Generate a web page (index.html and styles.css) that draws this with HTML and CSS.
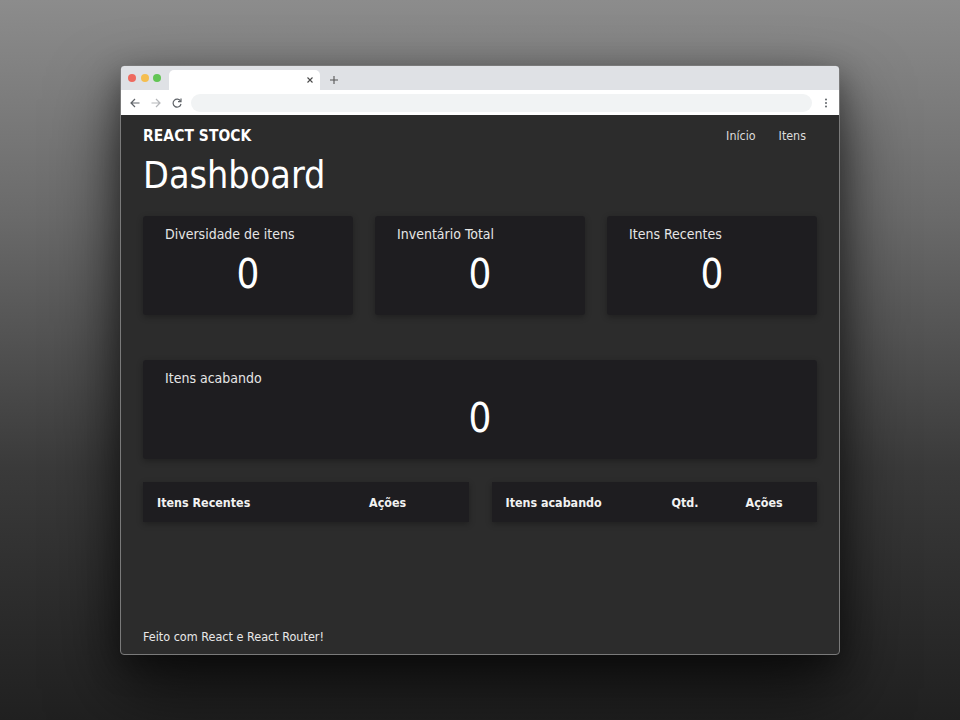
FILE: index.html
```html
<!DOCTYPE html>
<html lang="pt-BR">
<head>
<meta charset="utf-8">
<title>React Stock</title>
<link rel="stylesheet" href="styles.css">
</head>
<body>
<div class="window">
  <div class="titlebar">
    <div class="dots">
      <span class="dot red"></span>
      <span class="dot yellow"></span>
      <span class="dot green"></span>
    </div>
    <div class="tab">
      <svg class="tab-close" width="8" height="8" viewBox="0 0 8 8"><path d="M1.5 1.5L6.5 6.5M6.5 1.5L1.5 6.5" stroke="#4a4a4a" stroke-width="1.1" fill="none"/></svg>
    </div>
    <svg class="newtab" width="10" height="10" viewBox="0 0 10 10"><path d="M5 1V9M1 5H9" stroke="#555" stroke-width="1.1" fill="none"/></svg>
  </div>
  <div class="toolbar">
    <svg class="nav-icon" width="12" height="12" viewBox="0 0 12 12"><path d="M10.5 6H2M6 2L2 6L6 10" stroke="#5f6368" stroke-width="1.2" fill="none"/></svg>
    <svg class="nav-icon" width="12" height="12" viewBox="0 0 12 12"><path d="M1.5 6H10M6 2L10 6L6 10" stroke="#b5b7ba" stroke-width="1.2" fill="none"/></svg>
    <svg class="nav-icon" width="12" height="12" viewBox="0 0 12 12"><path d="M9.6 4.2A4 4 0 1 0 10 7" stroke="#5f6368" stroke-width="1.2" fill="none"/><path d="M10 1.6V4.6H7" stroke="#5f6368" stroke-width="1.2" fill="none"/></svg>
    <div class="address"></div>
    <svg class="kebab" width="4" height="12" viewBox="0 0 4 12"><circle cx="2" cy="2.5" r="1" fill="#5f6368"/><circle cx="2" cy="6" r="1" fill="#5f6368"/><circle cx="2" cy="9.5" r="1" fill="#5f6368"/></svg>
  </div>
  <div class="page">
    <header class="header">
      <div class="brand">REACT STOCK</div>
      <nav class="nav">
        <a class="nav-link">Início</a>
        <a class="nav-link">Itens</a>
      </nav>
    </header>
    <main class="main">
      <h1 class="title">Dashboard</h1>
      <section class="stats">
        <div class="card">
          <div class="card-title">Diversidade de itens</div>
          <div class="card-value">0</div>
        </div>
        <div class="card">
          <div class="card-title">Inventário Total</div>
          <div class="card-value">0</div>
        </div>
        <div class="card">
          <div class="card-title">Itens Recentes</div>
          <div class="card-value">0</div>
        </div>
      </section>
      <section class="card card-wide">
        <div class="card-title">Itens acabando</div>
        <div class="card-value">0</div>
      </section>
      <section class="tables">
        <div class="table table-recent">
          <div class="th">Itens Recentes</div>
          <div class="th">Ações</div>
        </div>
        <div class="table table-low">
          <div class="th">Itens acabando</div>
          <div class="th">Qtd.</div>
          <div class="th">Ações</div>
        </div>
      </section>
    </main>
    <footer class="footer">Feito com React e React Router!</footer>
  </div>
</div>
</body>
</html>
```
FILE: styles.css
```css
* { box-sizing: border-box; }
html, body { margin: 0; padding: 0; }
body {
  width: 960px;
  height: 720px;
  overflow: hidden;
  background: linear-gradient(to bottom, #8c8c8c 0%, #6a6a6a 30%, #3a3a3a 65%, #202020 100%);
  padding-top: 65px;
  font-family: "DejaVu Sans Condensed", "DejaVu Sans", sans-serif;
  font-stretch: condensed;
}
.window {
  width: 720px;
  height: 590px;
  margin: 0 auto;
  border: 1px solid #7a7a7a;
  border-radius: 4px;
  overflow: hidden;
  display: flex;
  flex-direction: column;
  box-shadow: 0 34px 70px rgba(0,0,0,0.65), 0 10px 30px rgba(0,0,0,0.35);
  background: #2c2c2c;
}
.titlebar {
  height: 24px;
  background: #dfe1e5;
  display: flex;
  align-items: flex-end;
  flex-shrink: 0;
}
.dots {
  display: flex;
  gap: 4.5px;
  padding-left: 7px;
  align-self: center;
}
.dot { width: 8px; height: 8px; border-radius: 50%; display: block; }
.red { background: #ee6a5f; }
.yellow { background: #f5be4f; }
.green { background: #62c554; }
.tab {
  width: 151px;
  height: 20px;
  margin-left: 8px;
  background: #fff;
  border-radius: 5px 5px 0 0;
  display: flex;
  align-items: center;
  justify-content: flex-end;
  padding-right: 6px;
}
.newtab { margin-left: 9px; margin-bottom: 5px; }
.toolbar {
  height: 25px;
  background: #fff;
  display: flex;
  align-items: center;
  padding-left: 8px;
  flex-shrink: 0;
}
.nav-icon { margin-right: 9px; }
.address {
  width: 621px;
  height: 18px;
  margin-left: -1px;
  background: #f1f3f4;
  border-radius: 9px;
}
.kebab { margin-left: 12px; }
.page {
  flex: 1;
  display: flex;
  flex-direction: column;
  padding: 0 22px;
  color: #fff;
}
.header {
  display: flex;
  justify-content: space-between;
  align-items: center;
  padding-top: 12px;
  height: 29px;
}
.brand {
  font-weight: bold;
  font-size: 15.4px;
  line-height: 16px;
  letter-spacing: 0.1px;
}
.nav { display: flex; gap: 23px; padding-right: 11px; }
.nav-link {
  font-size: 12.4px;
  line-height: 16px;
  color: #dcdcdc;
}
.title {
  font-size: 37.4px;
  font-weight: normal;
  line-height: 44px;
  margin: 9px 0 0 0;
}
.stats {
  display: grid;
  grid-template-columns: repeat(3, 1fr);
  gap: 22px;
  margin-top: 19px;
}
.card {
  background: #1e1d20;
  border-radius: 3px;
  height: 99px;
  padding: 8px 22px 0 22px;
  box-shadow: 0 2px 6px rgba(0,0,0,0.3);
}
.card-title {
  font-size: 14px;
  line-height: 20px;
  color: #e6e6e6;
}
.card-value {
  font-size: 40px;
  line-height: 48px;
  margin-top: 6px;
  text-align: center;
}
.card-wide { margin-top: 45px; }
.tables {
  display: grid;
  grid-template-columns: 1fr 1fr;
  gap: 23px;
  margin-top: 23px;
}
.table {
  display: grid;
  height: 40px;
  background: #1e1d20;
  box-shadow: 0 2px 6px rgba(0,0,0,0.3);
  align-items: center;
}
.table-recent { grid-template-columns: 212px 1fr; }
.table-low { grid-template-columns: 166px 74px 1fr; }
.th {
  padding-left: 14px;
  font-weight: bold;
  font-size: 12.4px;
  color: #f2f2f2;
}
.footer {
  margin-top: auto;
  font-size: 12.5px;
  line-height: 16px;
  padding-bottom: 9px;
  color: #e8e8e8;
}
```
